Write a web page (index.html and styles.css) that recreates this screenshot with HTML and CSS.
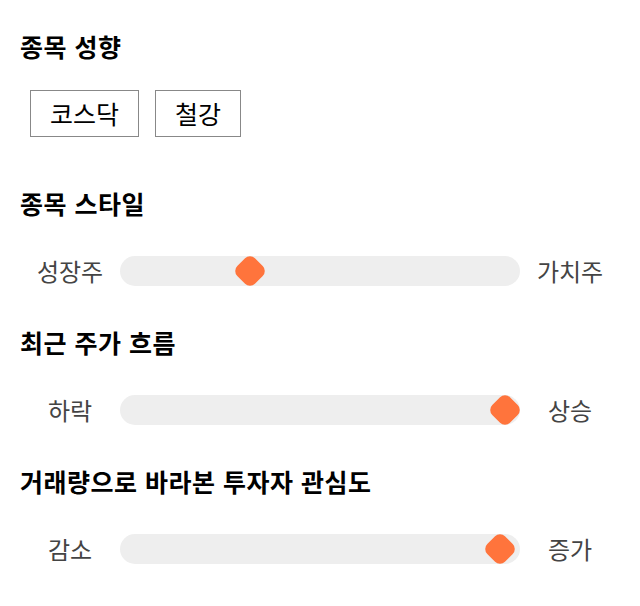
FILE: index.html
```html
<!DOCTYPE html>
<html lang="ko">
<head>
    <meta charset="UTF-8">
    <meta name="viewport" content="width=device-width, initial-scale=1.0">
    <title>종목 성향</title>
    <link rel="stylesheet" href="styles.css">
</head>
<body>
    <div class="container">
        <h2 class="title first">종목 성향</h2>
        <div class="tag-list">
            <span class="tag">코스닥</span>
            <span class="tag">철강</span>
        </div>

        <h2 class="title after-tags">종목 스타일</h2>
        <div class="slider-row">
            <span class="label">성장주</span>
            <div class="track">
                <span class="thumb" style="left: 32.5%"></span>
            </div>
            <span class="label">가치주</span>
        </div>

        <h2 class="title">최근 주가 흐름</h2>
        <div class="slider-row">
            <span class="label">하락</span>
            <div class="track">
                <span class="thumb" style="left: 96.25%"></span>
            </div>
            <span class="label">상승</span>
        </div>

        <h2 class="title">거래량으로 바라본 투자자 관심도</h2>
        <div class="slider-row">
            <span class="label">감소</span>
            <div class="track">
                <span class="thumb" style="left: 95%"></span>
            </div>
            <span class="label">증가</span>
        </div>
    </div>
</body>
</html>
```

FILE: styles.css
```css
body {
    font-family: "Noto Sans CJK KR", "Noto Sans", sans-serif;
    background-color: #fff;
    color: #000;
    margin: 0;
    padding: 20px;
}

.container {
    width: 600px;
}

.title {
    font-size: 25px;
    font-weight: bold;
    line-height: 32px;
    letter-spacing: 0.5px;
    margin: 40px 0 0 0;
}

.title.first {
    margin-top: 10px;
}

.title.after-tags {
    margin-top: 50px;
}

.tag-list {
    display: flex;
    gap: 16px;
    margin-top: 28px;
    padding-left: 10px;
}

.tag {
    border: 1px solid #888;
    height: 45px;
    padding: 0 19px;
    font-size: 25px;
    line-height: 45px;
}

.slider-row {
    display: flex;
    align-items: center;
    margin-top: 37px;
}

.label {
    width: 100px;
    text-align: center;
    font-size: 24px;
    line-height: 30px;
    color: #444;
}

.track {
    position: relative;
    width: 400px;
    height: 30px;
    border-radius: 15px;
    background-color: #eee;
}

.thumb {
    position: absolute;
    top: 50%;
    width: 25px;
    height: 25px;
    border-radius: 7px;
    background-color: #ff743c;
    transform: translate(-50%, -50%) rotate(45deg);
}
```
